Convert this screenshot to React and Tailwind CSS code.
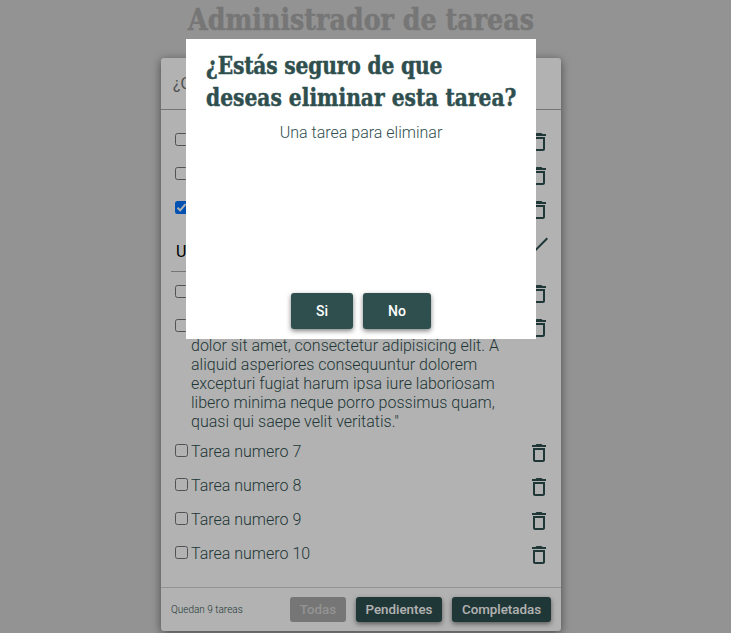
import { MdCheck, MdDeleteOutline } from 'react-icons/md';

const SLAB = "font-['Roboto_Slab','DejaVu_Serif',serif] font-bold [-webkit-text-stroke:0.5px_currentColor]";

function Checkbox({ checked }) {
  return (
    <span
      className={
        'mt-[3px] ml-1 mr-[3px] flex h-[13px] w-[13px] shrink-0 items-center justify-center rounded-[2.5px] ' +
        (checked ? 'bg-[#0075ff]' : 'border border-[#767676] bg-white')
      }
    >
      {checked && (
        <svg viewBox="0 0 13 13" className="h-[13px] w-[13px]" fill="none" stroke="white" strokeWidth="2">
          <path d="M2.5 6.8 5.2 9.4 10.5 3.2" />
        </svg>
      )}
    </span>
  );
}

function Task({ checked, children, height = 'h-6' }) {
  return (
    <li className={'flex items-start ' + height}>
      <Checkbox checked={checked} />
      <span className="flex-1 whitespace-nowrap leading-[19px] pt-px">{children}</span>
      <MdDeleteOutline size={24} />
    </li>
  );
}

export default function App() {
  return (
    <div className="relative h-[633px] w-[731px] overflow-hidden bg-[#d3d3d3] pr-[9px] font-['Roboto',sans-serif] text-base font-light text-[#2f4f4f]">
      <h1 className={SLAB + ' h-[58px] origin-center scale-x-[0.846] whitespace-nowrap text-center text-[30px] leading-[39px] text-[#a9a9a9]'}>
        Administrador de tareas
      </h1>
      <main className="mx-auto flex h-[573px] w-[400px] flex-col rounded-[3px] bg-white shadow-[0_2px_10px_rgba(0,0,0,0.5)]">
        <div className="flex h-[52px] items-center border-b border-[#a9a9a9] px-3 font-normal text-[#757575]">
          ¿Qué tarea quieres agregar?
        </div>
        <ul className="flex flex-1 flex-col gap-2.5 px-2.5 pt-5">
          <Task>Tarea numero 1</Task>
          <Task>Tarea numero 2</Task>
          <Task checked>Tarea numero 3</Task>
          <li className="flex h-10 items-start">
            <div className="flex h-10 flex-1 items-center border-b border-[#a9a9a9] pl-[5px] font-normal text-black">
              Una tarea para editar
            </div>
            <MdCheck size={24} />
          </li>
          <Task>Una tarea para eliminar</Task>
          <Task height="h-[115px]">
            Tarea numero 6: &quot;Lorem ipsum
            <br />
            dolor sit amet, consectetur adipisicing elit. A
            <br />
            aliquid asperiores consequuntur dolorem
            <br />
            excepturi fugiat harum ipsa iure laboriosam
            <br />
            libero minima neque porro possimus quam,
            <br />
            quasi qui saepe velit veritatis.&quot;
          </Task>
          <Task>Tarea numero 7</Task>
          <Task>Tarea numero 8</Task>
          <Task>Tarea numero 9</Task>
          <Task>Tarea numero 10</Task>
        </ul>
        <footer className="flex h-11 items-center gap-2.5 border-t border-[#d3d3d3] px-2.5 text-[13.33px] font-medium text-white">
          <span className="flex-1 text-[10px] font-light text-[#2f4f4f]">Quedan 9 tareas</span>
          <button className="h-[25px] w-14 rounded-[3px] bg-[#a9a9a9] text-[#d3d3d3]">Todas</button>
          <button className="h-[25px] w-[86px] rounded-[3px] bg-[#2f4f4f] shadow-[0_2px_5px_rgba(0,0,0,0.5)]">
            Pendientes
          </button>
          <button className="h-[25px] w-[99px] rounded-[3px] bg-[#2f4f4f] shadow-[0_2px_5px_rgba(0,0,0,0.5)]">
            Completadas
          </button>
        </footer>
      </main>
      <div className="absolute inset-0 flex items-start justify-center bg-black/30 pr-[9px] pt-[39px]">
        <section className="flex h-[300px] w-[350px] flex-col bg-white px-5 pb-2.5 pt-[11px]">
          <h2 className={SLAB + ' w-[368px] origin-left scale-x-[0.843] whitespace-nowrap text-2xl leading-8'}>
            <span className="tracking-[-0.2px]">¿Estás seguro de que</span>
            <br />
            deseas eliminar esta tarea?
          </h2>
          <p className="mt-[9px] text-center leading-[19px]">Una tarea para eliminar</p>
          <div className="mt-auto flex justify-center gap-2.5 text-sm font-medium text-white">
            <button className="h-9 w-[62px] rounded-[3px] bg-[#2f4f4f] shadow-[0_2px_5px_rgba(0,0,0,0.5)]">Si</button>
            <button className="h-9 w-[68px] rounded-[3px] bg-[#2f4f4f] shadow-[0_2px_5px_rgba(0,0,0,0.5)]">No</button>
          </div>
        </section>
      </div>
    </div>
  );
}
